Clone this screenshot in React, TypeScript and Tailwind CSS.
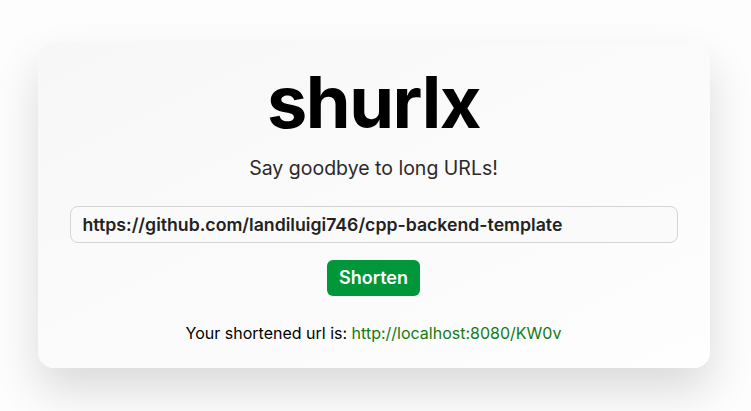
import { useState } from "react";

export default function App() {
  const [url, setUrl] = useState("https://github.com/landiluigi746/cpp-backend-template");
  const short = "http://localhost:8080/KW0v";

  return (
    <div className="flex h-screen w-full items-center justify-center bg-[#fdfdfd] font-['Inter',sans-serif]">
      <div className="mr-[4px] flex w-[672px] flex-col items-center rounded-2xl bg-gradient-to-br from-[#f7f7f7] to-[#fefefe] px-8 pt-[23px] pb-[23px] shadow-[0_22px_45px_rgba(0,0,0,0.14)]">
        <h1 className="text-[72px] leading-[72px] font-bold tracking-[-0.02em] text-black">shurlx</h1>
        <p className="mt-[16px] text-[19.5px] text-[#2a2a2a]">Say goodbye to long URLs!</p>
        <input
          value={url}
          onChange={(e) => setUrl(e.target.value)}
          className="mt-[22px] h-[37px] w-full rounded-lg border border-[#d4d4d8] bg-[#fafafa] px-3 text-[17.7px] font-semibold text-[#222] outline-none"
        />
        <button className="mt-[17px] h-[36px] rounded-md bg-[#00963a] px-3 text-lg font-semibold text-white">
          Shorten
        </button>
        <p className="mt-[25px] text-base text-black">
          Your shortened url is: <a href="#" className="text-[#137a13]">{short}</a>
        </p>
      </div>
    </div>
  );
}
